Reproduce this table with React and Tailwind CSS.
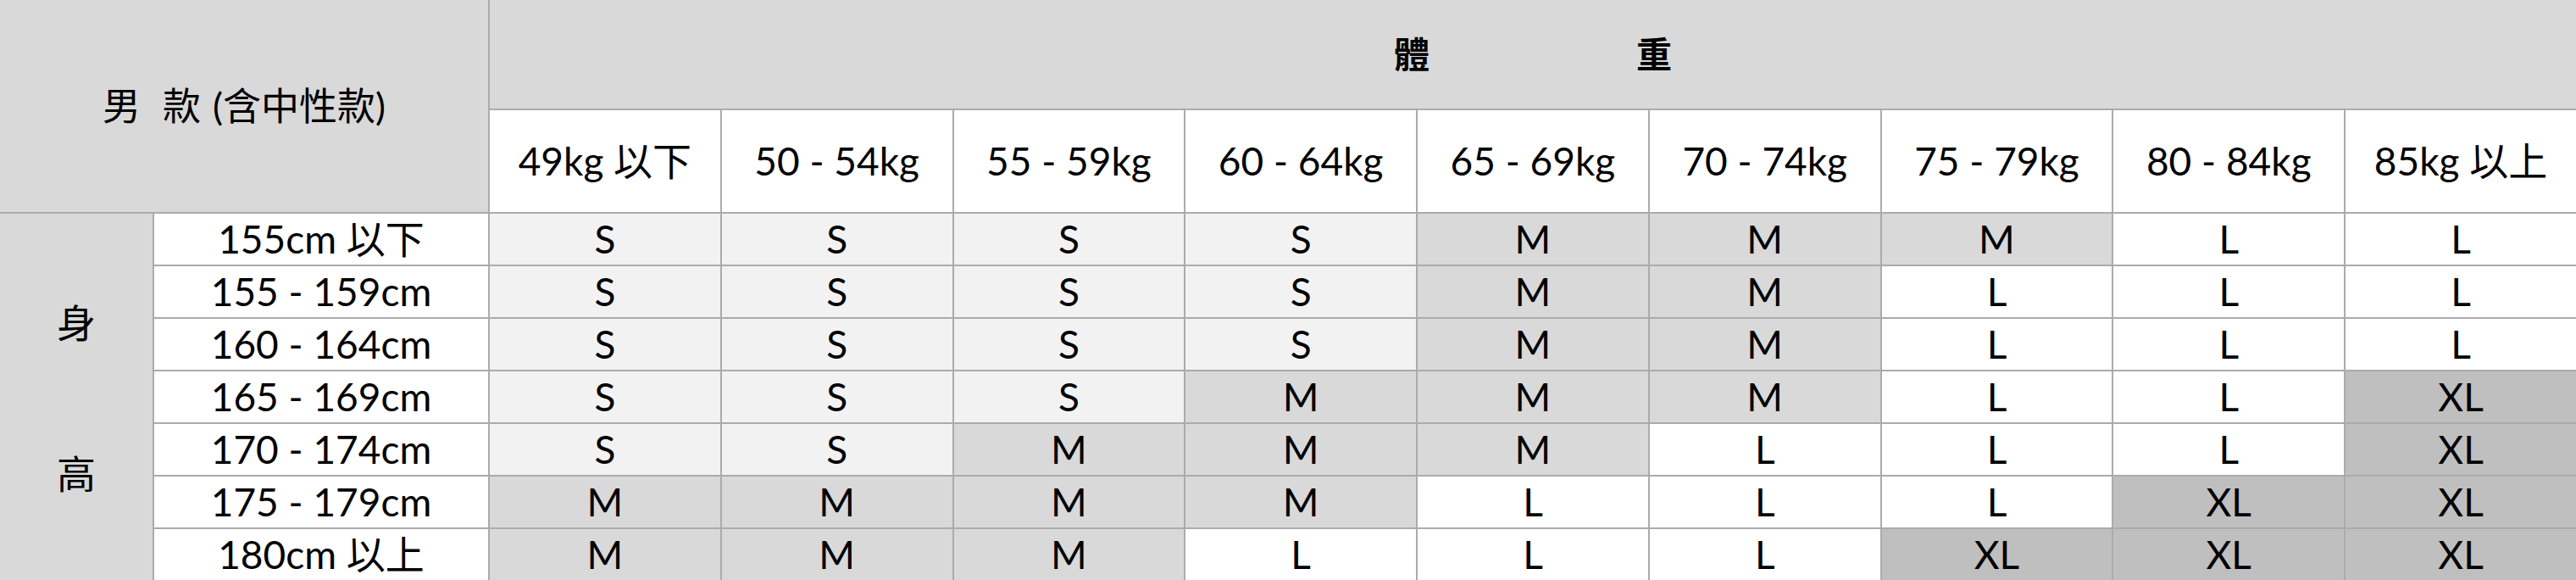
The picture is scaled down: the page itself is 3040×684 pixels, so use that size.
import React from 'react';

const weights = ['49kg 以下', '50 - 54kg', '55 - 59kg', '60 - 64kg', '65 - 69kg', '70 - 74kg', '75 - 79kg', '80 - 84kg', '85kg 以上'];

const rows = [
  { label: '155cm 以下', sizes: ['S', 'S', 'S', 'S', 'M', 'M', 'M', 'L', 'L'] },
  { label: '155 - 159cm', sizes: ['S', 'S', 'S', 'S', 'M', 'M', 'L', 'L', 'L'] },
  { label: '160 - 164cm', sizes: ['S', 'S', 'S', 'S', 'M', 'M', 'L', 'L', 'L'] },
  { label: '165 - 169cm', sizes: ['S', 'S', 'S', 'M', 'M', 'M', 'L', 'L', 'XL'] },
  { label: '170 - 174cm', sizes: ['S', 'S', 'M', 'M', 'M', 'L', 'L', 'L', 'XL'] },
  { label: '175 - 179cm', sizes: ['M', 'M', 'M', 'M', 'L', 'L', 'L', 'XL', 'XL'] },
  { label: '180cm 以上', sizes: ['M', 'M', 'M', 'L', 'L', 'L', 'XL', 'XL', 'XL'] },
];

// cell fill per size
const fills = {
  S: 'bg-[#f2f2f2]',
  M: 'bg-[#d9d9d9]',
  L: 'bg-white',
  XL: 'bg-[#bfbfbf]',
};

const line = 'border-[#ababab]';

export default function App() {
  return (
    <div className="w-[3040px] h-[684px] overflow-hidden bg-white text-black font-['Lato','Noto_Sans_CJK_TC',sans-serif] text-[46px] leading-none">
      <table className="w-[3040px] table-fixed border-separate border-spacing-0">
        <colgroup>
          <col className="w-[180px]" />
          <col className="w-[396px]" />
          {weights.map((w) => (
            <col key={w} />
          ))}
        </colgroup>
        <thead>
          <tr className="h-[128px]">
            <th rowSpan={2} colSpan={2} className="bg-[#d9d9d9] font-normal">
              <span className="inline-flex items-center text-[45px]">
                <span>男</span>
                <span className="ml-[26px]">款</span>
                <span className="ml-[14px]">(含中性款)</span>
              </span>
            </th>
            <th colSpan={9} className={`bg-[#d9d9d9] border-l-2 ${line}`}>
              <div className="flex justify-center gap-[244px] font-bold text-[42px]">
                <span>體</span>
                <span>重</span>
              </div>
            </th>
          </tr>
          <tr className="h-[122px]">
            {weights.map((w) => (
              <th key={w} className={`bg-white font-normal border-t-2 border-l-2 ${line}`}>
                {w}
              </th>
            ))}
          </tr>
        </thead>
        <tbody>
          {rows.map((r, i) => (
            <tr key={r.label} className="h-[62px]">
              {i === 0 && (
                <td rowSpan={7} className={`bg-[#d9d9d9] border-t-2 ${line} align-middle`}>
                  <div className="flex flex-col items-center gap-[132px] pt-[4px]">
                    <span>身</span>
                    <span>高</span>
                  </div>
                </td>
              )}
              <td className={`bg-white text-center border-t-2 border-l-2 ${line}`}>{r.label}</td>
              {r.sizes.map((s, j) => (
                <td key={j} className={`${fills[s]} text-center border-t-2 border-l-2 ${line}`}>
                  {s}
                </td>
              ))}
            </tr>
          ))}
        </tbody>
      </table>
    </div>
  );
}
